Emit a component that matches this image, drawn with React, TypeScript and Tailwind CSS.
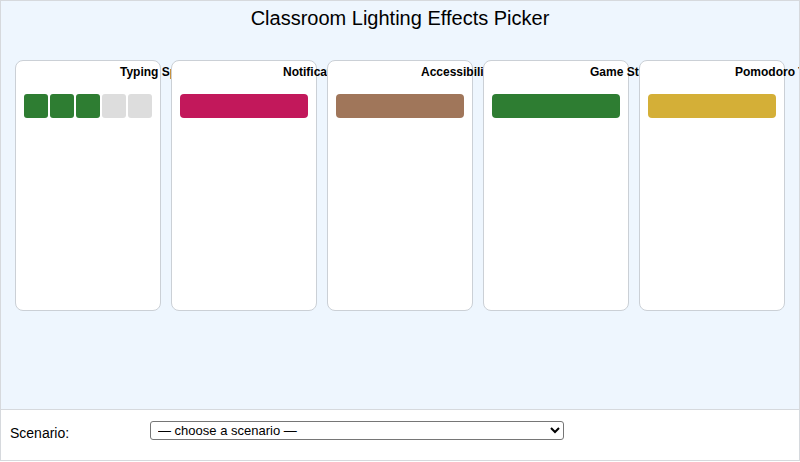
import React from "react";

type Effect = {
  name: string;
  offset: string;
  color: string;
  segments?: boolean[];
};

const EFFECTS: Effect[] = [
  { name: "Typing Speed Meter", offset: "ml-[96px]", color: "#2e7d32", segments: [true, true, true, false, false] },
  { name: "Notification Flash", offset: "ml-[103px]", color: "#c2185b" },
  { name: "Accessibility Mode", offset: "ml-[85px]", color: "#a0765a" },
  { name: "Game Status", offset: "ml-[98px]", color: "#2e7d32" },
  { name: "Pomodoro Timer", offset: "ml-[87px]", color: "#d4af37" },
];

const EffectCard = ({ effect }: { effect: Effect }) => (
  <div className="relative w-[146px] h-[251px] shrink-0 rounded-lg border border-[#cbd0d6] bg-white px-2 pt-[3px]">
    {/* title overflows into the next card, which covers it */}
    <div className={`${effect.offset} whitespace-nowrap text-[12px] font-bold leading-[16px] text-black`}>
      {effect.name}
    </div>
    <div className="mt-[14px] flex gap-[2px]">
      {effect.segments ? (
        effect.segments.map((on, i) => (
          <div
            key={i}
            className="h-6 flex-1 rounded-[3px]"
            style={{ backgroundColor: on ? effect.color : "#dddddd" }}
          />
        ))
      ) : (
        <div className="h-6 flex-1 rounded-[4px]" style={{ backgroundColor: effect.color }} />
      )}
    </div>
  </div>
);

export default function App() {
  return (
    <div className="w-[800px] h-[461px] border border-[#d6d9dd] bg-white font-['Liberation_Sans',Arial,sans-serif] text-black">
      <div className="h-[408px] overflow-hidden bg-[#eef6fe] pt-[3px]">
        <h1 className="text-center text-[20px] leading-[28px]">Classroom Lighting Effects Picker</h1>
        <div className="mt-[28px] flex gap-[10px] pl-[14px]">
          {EFFECTS.map((e) => (
            <EffectCard key={e.name} effect={e} />
          ))}
        </div>
      </div>
      <div className="flex h-[51px] items-start border-t border-[#d6d9dd] pl-[9px] pt-[11px]">
        <label className="w-[140px] pt-[2px] text-[14px] leading-[20px]">Scenario:</label>
        <select className="h-[19px] w-[414px] rounded-[3px] border border-[#767676] bg-white pl-[3px] text-[13px] font-['Liberation_Sans',Arial,sans-serif]">
          <option>— choose a scenario —</option>
          <option>Quiet reading</option>
          <option>Group work</option>
          <option>Test time</option>
        </select>
      </div>
    </div>
  );
}
